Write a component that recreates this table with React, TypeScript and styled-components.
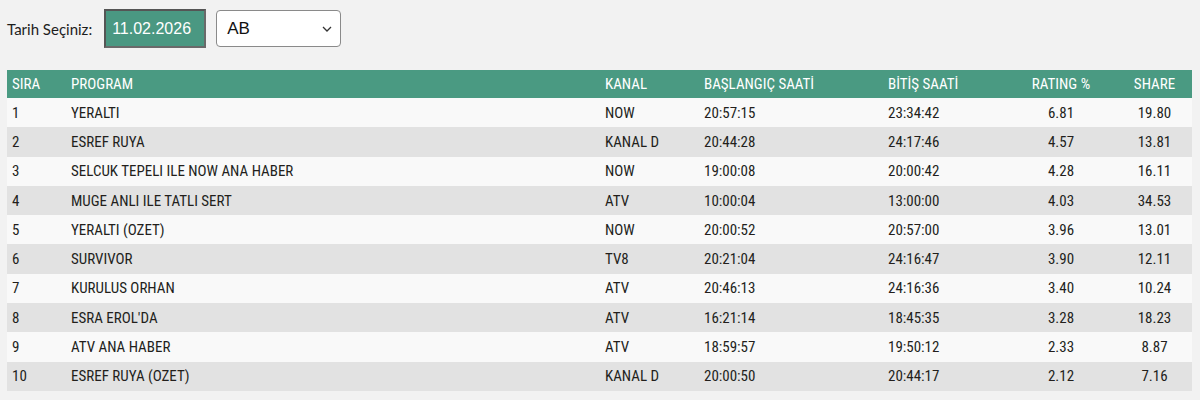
import styled, { createGlobalStyle } from 'styled-components'

const GlobalStyle = createGlobalStyle`
  body {
    margin: 0;
    background: #f2f2f2;
    font-family: "Liberation Sans", Arial, sans-serif;
  }
`

const Page = styled.div`
  padding: 9px 8px 0 7px;
`

const Toolbar = styled.div`
  display: flex;
  align-items: center;
  height: 39px;
  margin-bottom: 22px;
`

const Label = styled.span`
  font-family: Lato, "Liberation Sans", sans-serif;
  font-size: 15px;
  color: #1d1d1d;
  margin-right: 12px;
`

const DateBox = styled.div`
  box-sizing: border-box;
  width: 102px;
  height: 39px;
  background: #4a9882;
  border: 2px solid #555;
  border-right-color: #6a6a6a;
  border-bottom-color: #6a6a6a;
  color: #fff;
  font-size: 16px;
  display: flex;
  align-items: center;
  padding-left: 6px;
  margin-right: 10px;
`

const SelectBox = styled.div`
  box-sizing: border-box;
  width: 125px;
  height: 37px;
  background: #fff;
  border: 1px solid #8a8a8a;
  border-radius: 4px;
  display: flex;
  align-items: center;
  justify-content: space-between;
  padding: 0 8px 0 10px;
  font-size: 17px;
  color: #111;
`

const Table = styled.table`
  width: 1185px;
  border-collapse: collapse;
  table-layout: fixed;
  font-family: "Liberation Sans Narrow", "Roboto Condensed", Roboto, sans-serif;
  font-size: 15px;
  color: #231f1c;
`

const Th = styled.th<{ $align?: string }>`
  height: 28px;
  padding: 0 5px;
  background: #4a9a82;
  color: #fff;
  font-weight: 400;
  text-align: ${p => p.$align || 'left'};
`

const Row = styled.tr<{ $even: boolean }>`
  background: ${p => (p.$even ? '#e2e2e2' : '#f9f9f9')};
`

const Td = styled.td<{ $align?: string }>`
  height: 29.3px;
  padding: 0 5px;
  text-align: ${p => p.$align || 'left'};
`

const rows = [
  ['1', 'YERALTI', 'NOW', '20:57:15', '23:34:42', '6.81', '19.80'],
  ['2', 'ESREF RUYA', 'KANAL D', '20:44:28', '24:17:46', '4.57', '13.81'],
  ['3', 'SELCUK TEPELI ILE NOW ANA HABER', 'NOW', '19:00:08', '20:00:42', '4.28', '16.11'],
  ['4', 'MUGE ANLI ILE TATLI SERT', 'ATV', '10:00:04', '13:00:00', '4.03', '34.53'],
  ['5', 'YERALTI (OZET)', 'NOW', '20:00:52', '20:57:00', '3.96', '13.01'],
  ['6', 'SURVIVOR', 'TV8', '20:21:04', '24:16:47', '3.90', '12.11'],
  ['7', 'KURULUS ORHAN', 'ATV', '20:46:13', '24:16:36', '3.40', '10.24'],
  ['8', "ESRA EROL'DA", 'ATV', '16:21:14', '18:45:35', '3.28', '18.23'],
  ['9', 'ATV ANA HABER', 'ATV', '18:59:57', '19:50:12', '2.33', '8.87'],
  ['10', 'ESREF RUYA (OZET)', 'KANAL D', '20:00:50', '20:44:17', '2.12', '7.16'],
]

const widths = [59, 534, 99, 184, 122, 112, 75]

const Chevron = () => (
  <svg width="10" height="6" viewBox="0 0 10 6">
    <path d="M1 1l4 4 4-4" fill="none" stroke="#333" strokeWidth="1.3" />
  </svg>
)

const App = () => {
  return (
    <Page>
      <GlobalStyle />
      <Toolbar>
        <Label>Tarih Seçiniz:</Label>
        <DateBox>11.02.2026</DateBox>
        <SelectBox>
          AB
          <Chevron />
        </SelectBox>
      </Toolbar>
      <Table>
        <colgroup>
          {widths.map((w, i) => (
            <col key={i} style={{ width: w }} />
          ))}
        </colgroup>
        <thead>
          <tr>
            <Th>SIRA</Th>
            <Th>PROGRAM</Th>
            <Th>KANAL</Th>
            <Th>BAŞLANGIÇ SAATİ</Th>
            <Th>BİTİŞ SAATİ</Th>
            <Th $align="center">RATING %</Th>
            <Th $align="center">SHARE</Th>
          </tr>
        </thead>
        <tbody>
          {rows.map((r, i) => (
            <Row key={r[0]} $even={i % 2 === 1}>
              {r.map((c, j) => (
                <Td key={j} $align={j >= 5 ? 'center' : 'left'}>
                  {c}
                </Td>
              ))}
            </Row>
          ))}
        </tbody>
      </Table>
    </Page>
  )
}

export default App
